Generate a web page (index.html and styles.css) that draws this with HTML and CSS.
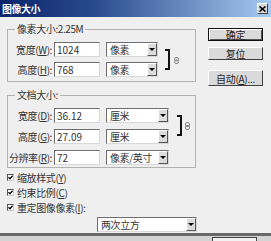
FILE: index.html
```html
<!DOCTYPE html>
<html>
<head>
<meta charset="utf-8">
<link rel="stylesheet" href="styles.css">
</head>
<body>
<div class="window">
  <div class="titlebar">
    <span class="title">图像大小</span>
    <span class="close"><svg width="7" height="6" viewBox="0 0 7 6"><path d="M0.5 0.5 L6.5 5.5 M6.5 0.5 L0.5 5.5" stroke="#000" stroke-width="1.6"/></svg></span>
  </div>
  <div class="main">
    <div class="left">
      <fieldset class="group g1">
        <legend>像素大小:2.25M</legend>
        <div class="group-body">
          <div class="rows r1">
            <div class="lbl">宽度(<u>W</u>):</div>
            <div class="input">1024</div>
            <div class="select s52"><span class="val">像素</span><span class="drop"><i></i></span></div>
            <div class="lbl">高度(<u>H</u>):</div>
            <div class="input">768</div>
            <div class="select s52"><span class="val">像素</span><span class="drop"><i></i></span></div>
          </div>
          <div class="bracket b1"></div>
          <svg class="link l1" width="5" height="7" viewBox="0 0 5 7"><rect x="0.5" y="0.5" width="4" height="3.5" rx="1.5" fill="none" stroke="#8a8a8a"/><rect x="0.5" y="3" width="4" height="3.5" rx="1.5" fill="none" stroke="#8a8a8a"/></svg>
        </div>
      </fieldset>
      <fieldset class="group g2">
        <legend>文档大小:</legend>
        <div class="group-body">
          <div class="rows r2">
            <div class="lbl">宽度(<u>D</u>):</div>
            <div class="input">36.12</div>
            <div class="select s63"><span class="val">厘米</span><span class="drop"><i></i></span></div>
            <div class="lbl">高度(<u>G</u>):</div>
            <div class="input">27.09</div>
            <div class="select s63"><span class="val">厘米</span><span class="drop"><i></i></span></div>
            <div class="lbl">分辨率(<u>R</u>):</div>
            <div class="input">72</div>
            <div class="select s63"><span class="val">像素/英寸</span><span class="drop"><i></i></span></div>
          </div>
          <div class="bracket b2"></div>
          <svg class="link l2" width="5" height="8" viewBox="0 0 5 8"><rect x="0.5" y="0.5" width="4" height="4" rx="1.5" fill="none" stroke="#8a8a8a"/><rect x="0.5" y="3.5" width="4" height="4" rx="1.5" fill="none" stroke="#8a8a8a"/></svg>
        </div>
      </fieldset>
      <div class="checks">
        <div class="check"><span class="box"><svg width="5" height="5" viewBox="0 0 5 5"><path d="M0.5 2.2 L2 3.8 L4.6 0.8" fill="none" stroke="#000" stroke-width="1.3"/></svg></span><span>缩放样式(<u>Y</u>)</span></div>
        <div class="check"><span class="box"><svg width="5" height="5" viewBox="0 0 5 5"><path d="M0.5 2.2 L2 3.8 L4.6 0.8" fill="none" stroke="#000" stroke-width="1.3"/></svg></span><span>约束比例(<u>C</u>)</span></div>
        <div class="check"><span class="box"><svg width="5" height="5" viewBox="0 0 5 5"><path d="M0.5 2.2 L2 3.8 L4.6 0.8" fill="none" stroke="#000" stroke-width="1.3"/></svg></span><span>重定图像像素(<u>I</u>):</span></div>
      </div>
      <div class="select resample"><span class="val">两次立方</span><span class="drop"><i></i></span></div>
    </div>
    <div class="right">
      <div class="btn default">确定</div>
      <div class="btn reset">复位</div>
      <div class="btn auto">自动(<u>A</u>)...</div>
    </div>
  </div>
</div>
<div class="frame-bottom"></div>
<div class="below"><div class="ghost"></div></div>
</body>
</html>
```

FILE: styles.css
```css
* { box-sizing: border-box; }

body {
  margin: 0;
  width: 271px;
  height: 241px;
  overflow: hidden;
  background: #d2d2d2;
  font-family: "Noto Sans CJK SC", "Noto Sans", sans-serif;
  font-size: 10px;
  color: #222;
}

u { text-decoration: underline; text-underline-offset: 1px; }

.window {
  width: 271px;
  height: 233px;
  background: #efefef;
  display: flex;
  flex-direction: column;
}

.titlebar {
  height: 17px;
  flex: none;
  background: linear-gradient(to right, #0a246a, #2a4a8e 35%, #a6caf0);
  display: flex;
  align-items: center;
  justify-content: space-between;
  padding: 0 3px 0 2px;
}

.title {
  color: #fff;
  font-weight: bold;
  font-size: 10px;
  line-height: 12px;
  letter-spacing: -0.5px;
}

.close {
  width: 11px;
  height: 11px;
  background: #d8d8d8;
  border: 1px solid;
  border-color: #fff #404040 #404040 #fff;
  display: flex;
  align-items: center;
  justify-content: center;
}

.main {
  flex: 1;
  display: flex;
}

.left {
  margin-left: 7px;
  width: 189px;
  padding-top: 6px;
  display: flex;
  flex-direction: column;
}

.group {
  margin: 0;
  padding: 0;
  min-width: 0;
  border: 1px solid #b2b2b2;
}

.group legend {
  margin-left: 7px;
  padding: 0 2px;
  font-size: 10px;
  line-height: 12px;
  letter-spacing: -0.4px;
  color: #333;
}

.g1 { padding-top: 7px; padding-bottom: 4px; }
.g2 { margin-top: 7px; padding-top: 7px; padding-bottom: 2px; }

.group-body {
  display: flex;
  align-items: flex-start;
}

.rows {
  display: grid;
  grid-template-columns: 46px 46px auto;
}
.r1 { row-gap: 5px; }
.r2 { row-gap: 6px; }

.lbl {
  display: flex;
  justify-content: flex-end;
  align-items: center;
  padding-right: 2px;
  white-space: nowrap;
  height: 15px;
  line-height: 13px;
  letter-spacing: -0.4px;
  color: #333;
}

.input {
  height: 15px;
  background: #fff;
  border: 1px solid;
  border-color: #6e6e6e #d8d8d8 #d8d8d8 #6e6e6e;
  padding-left: 2px;
  line-height: 13px;
  color: #333;
}

.select {
  height: 15px;
  margin-left: 6px;
  background: #fff;
  border: 1px solid;
  border-color: #6e6e6e #d8d8d8 #d8d8d8 #6e6e6e;
  display: flex;
}
.s52 { width: 52px; }
.s63 { width: 63px; }

.select .val {
  flex: 1;
  padding-left: 3px;
  line-height: 13px;
  white-space: nowrap;
  overflow: hidden;
  letter-spacing: -0.4px;
  color: #333;
}

.drop {
  width: 10px;
  flex: none;
  background: #dcdcdc;
  border: 1px solid;
  border-color: #fff #555 #555 #fff;
  display: flex;
  align-items: center;
  justify-content: center;
}
.drop i {
  width: 0;
  height: 0;
  border-left: 3px solid transparent;
  border-right: 3px solid transparent;
  border-top: 3px solid #000;
}

.bracket {
  width: 5px;
  height: 21px;
  border: 2px solid #111;
  border-left: none;
  margin-top: 7px;
}
.b1 { margin-left: 7px; }
.b2 { margin-left: 8px; }

.link { display: block; }
.l1 { margin-left: 4px; margin-top: 15px; }
.l2 { margin-left: 3px; margin-top: 14px; }

.checks {
  margin-top: 2px;
  display: flex;
  flex-direction: column;
}

.check {
  height: 15px;
  display: flex;
  align-items: center;
  letter-spacing: -0.4px;
  color: #333;
}

.box {
  width: 7px;
  height: 7px;
  border: 1px solid;
  border-color: #555 #ccc #ccc #555;
  background: #fff;
  margin-right: 3px;
  display: flex;
  align-items: center;
  justify-content: center;
}

.resample {
  margin-top: 2px;
  margin-left: 90px;
  width: 100px;
}

.right {
  margin-left: 12px;
  width: 55px;
  padding-top: 11px;
  display: flex;
  flex-direction: column;
}

.btn {
  height: 13px;
  background: #dadada;
  border: 1px solid;
  border-color: #fff #404040 #404040 #fff;
  display: flex;
  align-items: center;
  justify-content: center;
  font-size: 10px;
  line-height: 11px;
  color: #222;
  letter-spacing: -0.3px;
}
.btn.default {
  border: 1px solid #111;
  box-shadow: inset 1px 1px 0 #fff, inset -1px -1px 0 #555;
}
.btn.reset { margin-top: 6px; }
.btn.auto { margin-top: 10px; height: 16px; }

.frame-bottom {
  height: 3px;
  background: #6a6a6a;
}

.below {
  height: 5px;
  background: #d4d4d4;
  padding-left: 212px;
  padding-top: 1px;
}
.ghost {
  width: 45px;
  height: 4px;
  background: #f2f2f2;
  border: 1px solid #444;
  border-bottom: none;
}
```
